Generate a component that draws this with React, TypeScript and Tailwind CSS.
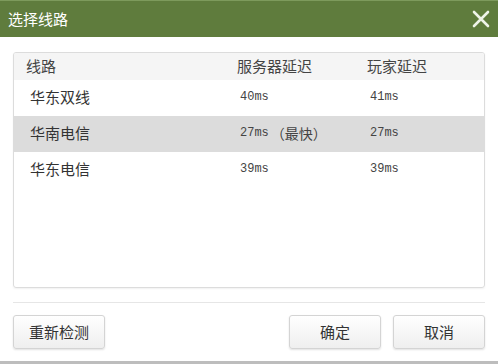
const rows = [
  { name: "华东双线", server: "40ms", player: "41ms", active: false },
  { name: "华南电信", server: "27ms", fastest: true, player: "27ms", active: true },
  { name: "华东电信", server: "39ms", player: "39ms", active: false },
];

const cjk = "font-['Noto_Sans_CJK_SC','Noto_Sans',sans-serif]";
const mono = "font-['Liberation_Mono','DejaVu_Sans_Mono',monospace]";

function Btn({ label, className = "" }: { label: string; className?: string }) {
  return (
    <button
      className={`h-[34px] rounded-[3px] border border-[#d4d4d4] bg-gradient-to-b from-white to-[#efefef] text-[15px] text-[#333] shadow-[0_1px_2px_rgba(0,0,0,0.12)] ${className}`}
    >
      {label}
    </button>
  );
}

export default function App() {
  return (
    <div className={`w-[498px] h-[364px] bg-white flex flex-col ${cjk}`}>
      <div className="h-[37px] shrink-0 bg-[#5f7c3d] border-t border-[#7d9a5c] flex items-center justify-between pl-[8px] pr-[8px]">
        <span className="text-[15px] text-white">选择线路</span>
        <svg width="18" height="18" viewBox="0 0 18 18" className="text-[#eef3e8]">
          <path d="M2 2 L16 16 M16 2 L2 16" stroke="currentColor" strokeWidth="2.6" strokeLinecap="round" />
        </svg>
      </div>

      <div className="flex-1 flex flex-col px-[13px] pt-[15px] border-b-[3px] border-[#bdbdbd]">
        <div className="h-[236px] rounded-[3px] border border-[#dcdcdc] shadow-[0_1px_2px_rgba(0,0,0,0.06)] overflow-hidden">
          <div className="h-[27px] bg-[#f5f5f5] flex items-center text-[15px] text-[#444]">
            <div className="w-[223px] pl-[12px]">线路</div>
            <div className="w-[130px]">服务器延迟</div>
            <div>玩家延迟</div>
          </div>
          {rows.map((r) => (
            <div
              key={r.name}
              className={`h-[36px] flex items-center pb-[2px] ${r.active ? "bg-[#dcdcdc]" : "bg-white"}`}
            >
              <div className="w-[226px] pl-[16px] text-[15px] text-[#333]">{r.name}</div>
              <div className="w-[130px] flex items-center text-[#444]">
                <span className={`${mono} text-[12px]`}>{r.server}</span>
                {r.fastest && <span className="text-[14px] ml-[2px]">（最快）</span>}
              </div>
              <div className={`${mono} text-[12px] text-[#444]`}>{r.player}</div>
            </div>
          ))}
        </div>

        <div className="mt-[14px] h-px bg-[#e6e6e6]" />

        <div className="mt-[12px] flex">
          <Btn label="重新检测" className="w-[92px]" />
          <Btn label="确定" className="w-[92px] ml-auto" />
          <Btn label="取消" className="w-[92px] ml-[12px]" />
        </div>
      </div>
    </div>
  );
}
